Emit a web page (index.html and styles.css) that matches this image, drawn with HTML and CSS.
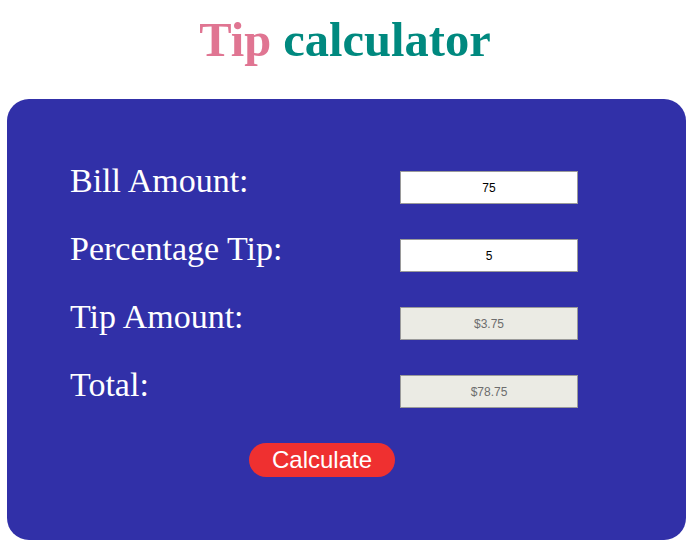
FILE: index.html
```
<!DOCTYPE html>
<html>
<head>
<meta charset="utf-8">
<link rel="stylesheet" href="styles.css">
</head>
<body>
<h1 class="title"><span class="pink">Tip</span> <span class="teal">calculator</span></h1>
<div class="card">
  <div class="row"><label class="lbl">Bill Amount:</label><input class="field" type="text" value="75"></div>
  <div class="row"><label class="lbl">Percentage Tip:</label><input class="field" type="text" value="5"></div>
  <div class="row"><label class="lbl">Tip Amount:</label><input class="field ro" type="text" value="$3.75" disabled></div>
  <div class="row"><label class="lbl">Total:</label><input class="field ro" type="text" value="$78.75" disabled></div>
  <div class="actions"><button class="btn">Calculate</button></div>
</div>
</body>
</html>
```
FILE: styles.css
```
html, body { margin: 0; padding: 0; background: #fff; }
body { font-family: "Liberation Serif", serif; }
.title {
  margin: 12px 0 0 0;
  height: 87px;
  font-size: 48.5px;
  line-height: 55px;
  font-weight: bold;
  text-align: center;
}
.pink { color: #e07592; }
.teal { color: #00897f; }
.card {
  margin: 0 4px 0 7px;
  height: 441px;
  box-sizing: border-box;
  background: #3130a8;
  border-radius: 22px;
  padding: 63px 0 0 63px;
}
.row { display: flex; align-items: flex-start; height: 68px; }
.lbl {
  width: 330px;
  font-size: 34px;
  line-height: 37px;
  color: #fff;
}
.field {
  margin-top: 9px;
  width: 178px;
  height: 33px;
  box-sizing: border-box;
  border: 1px solid #9a9a9a;
  background: #fff;
  font-family: "Liberation Sans", Arial, sans-serif;
  font-size: 12px;
  color: #000;
  text-align: center;
  padding: 0;
}
.field.ro { background: #ebebe4; color: #6d6d6d; }
.actions { padding: 9px 0 0 179px; }
.btn {
  width: 146px;
  height: 34px;
  border: none;
  border-radius: 17px;
  background: #ef3030;
  color: #fff;
  font-family: "Liberation Sans", Arial, sans-serif;
  font-size: 24px;
  padding: 0;
}
```
